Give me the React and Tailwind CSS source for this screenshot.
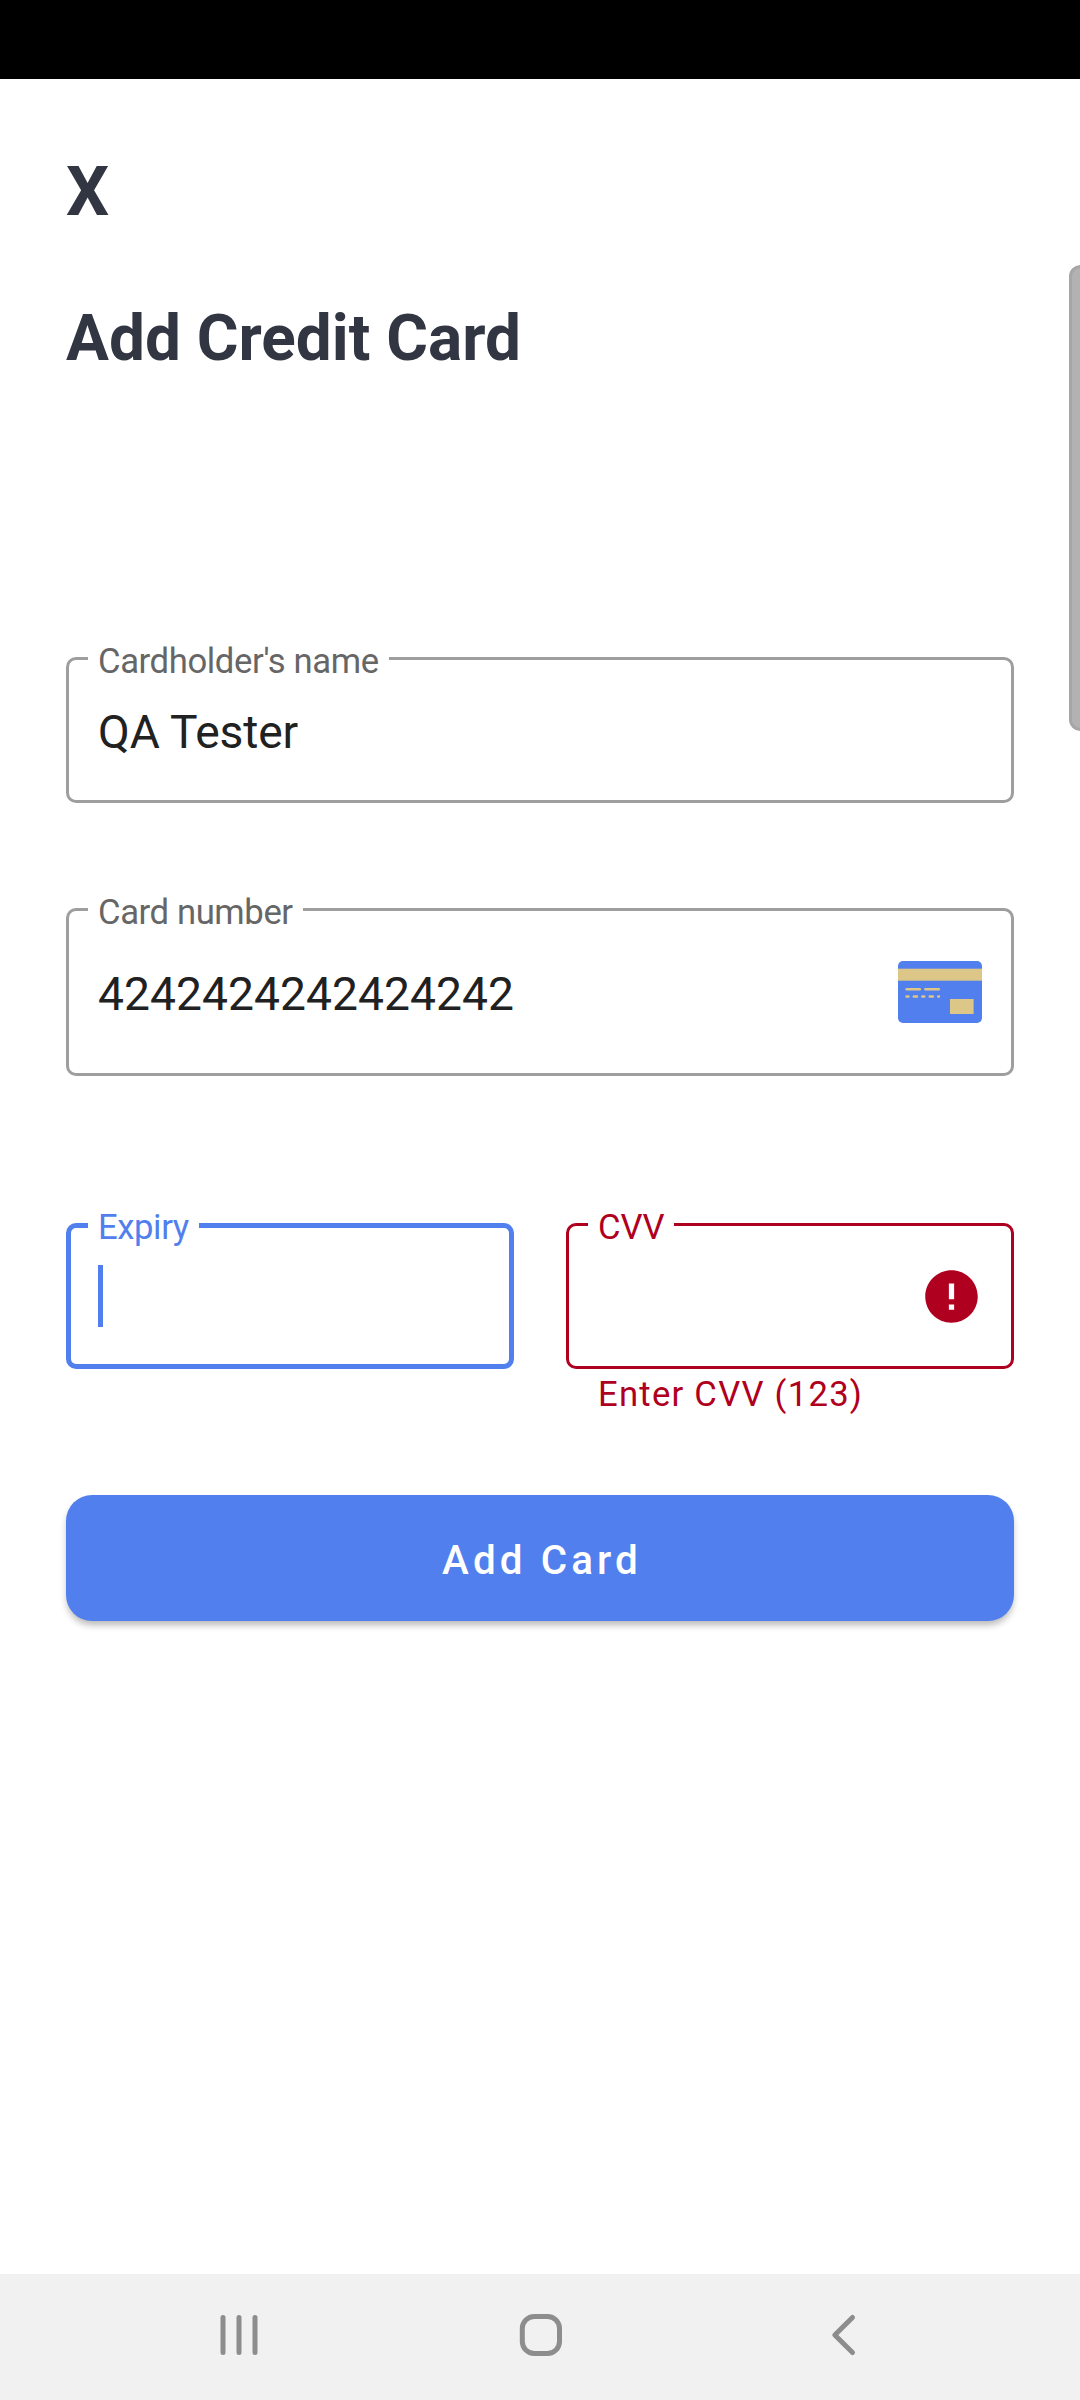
import React from "react";

function OutlinedField({ label, notch, tone, className, children }) {
  return (
    <div className={`relative flex items-center rounded-[10px] ${tone} ${className}`}>
      <span
        className={`absolute flex h-[40px] items-center whitespace-nowrap bg-white pl-[10px] text-[34.65px] leading-[40px] ${notch}`}
      >
        {label}
      </span>
      {children}
    </div>
  );
}

function CardIcon() {
  return (
    <svg className="ml-auto mr-[29px] h-[62px] w-[84px]" viewBox="0 0 84 62">
      <rect width="84" height="62" rx="5" fill="#527fee" />
      <rect y="7.7" width="84" height="12" fill="#dcc788" />
      <g stroke="#dcc788" strokeWidth="2.6" strokeLinecap="round">
        <path d="M8.6 28.2H21.8M27.4 28.2H40.8" />
        <path d="M8.6 35.5H10.4M15.8 35.5H19M24.4 35.5H26.2M31.8 35.5H34.8M40.3 35.5H40.9" />
      </g>
      <rect x="52" y="38" width="23.6" height="15" fill="#dcc788" />
    </svg>
  );
}

function ErrorIcon() {
  return (
    <svg className="ml-auto mr-[28px] h-[63px] w-[63px]" viewBox="0 0 24 24" fill="#b00020">
      <path d="M12 2C6.48 2 2 6.48 2 12s4.48 10 10 10 10-4.48 10-10S17.52 2 12 2zm1 15h-2v-2h2v2zm0-4h-2V7h2v6z" />
    </svg>
  );
}

function NavBar() {
  return (
    <nav className="h-[126px] w-full bg-[#f1f1f1]">
      <svg className="block h-[126px] w-[1080px]" viewBox="0 0 1080 126" fill="none" stroke="#8d8d8d" strokeLinecap="round">
        <path d="M223 43.5V78.5M239 43.5V78.5M255 43.5V78.5" strokeWidth="5" />
        <rect x="522.3" y="42.5" width="37.2" height="37" rx="12" strokeWidth="5" />
        <path d="M852.5 43.5L834.8 61L852.5 78.5" strokeWidth="5" strokeLinejoin="round" />
      </svg>
    </nav>
  );
}

export default function App() {
  return (
    <div className="relative flex h-[2400px] w-[1080px] flex-col overflow-hidden bg-white font-[Roboto,sans-serif]">
      <div className="h-[79px] w-full bg-black" />
      <div className="absolute right-[-12px] top-[265px] h-[466px] w-[23px] rounded-[12px] border-[3px] border-[#a6a6a6] bg-[#b2b2b2]" />
      <main className="flex flex-1 flex-col px-[66px]">
        <div className="mt-[73px] h-[80px] text-[68px] font-bold leading-[80px] text-[#323643]">X</div>
        <h1 className="mt-[69px] h-[76px] text-[63.9px] font-bold leading-[76px] text-[#323643]">Add Credit Card</h1>

        <OutlinedField
          label="Cardholder's name"
          tone="border-[3px] border-[#9e9e9e]"
          notch="left-[19px] top-[-19px] w-[301px] tracking-[-0.4px] text-[#666666]"
          className="mt-[280px] h-[146px]"
        >
          <span className="pl-[29px] pt-[4px] text-[46.2px] leading-[54px] tracking-[-0.15px] text-[#212121]">QA Tester</span>
        </OutlinedField>

        <OutlinedField
          label="Card number"
          tone="border-[3px] border-[#9e9e9e]"
          notch="left-[19px] top-[-19px] w-[215px] tracking-[-0.4px] text-[#666666]"
          className="mt-[105px] h-[168px]"
        >
          <span className="pl-[29px] pt-[3px] text-[46.2px] leading-[54px] tracking-[0.04px] text-[#212121]">4242424242424242</span>
          <CardIcon />
        </OutlinedField>

        <div className="mt-[147px] flex justify-between">
          <OutlinedField
            label="Expiry"
            tone="border-[5px] border-[#527fee]"
            notch="left-[17px] top-[-21px] w-[111px] tracking-[-0.4px] text-[#527fee]"
            className="h-[146px] w-[448px]"
          >
            <span className="ml-[27px] h-[62px] w-[5px] bg-[#527fee]" />
          </OutlinedField>
          <div className="flex w-[448px] flex-col">
            <OutlinedField
              label="CVV"
              tone="border-[3px] border-[#b00020]"
              notch="left-[19px] top-[-19px] w-[86px] text-[#b00020]"
              className="h-[146px]"
            >
              <ErrorIcon />
            </OutlinedField>
            <p className="mt-[5px] h-[40px] whitespace-nowrap pl-[32px] text-[34.65px] leading-[40px] tracking-[1.25px] text-[#b00020]">
              Enter CVV (123)
            </p>
          </div>
        </div>

        <button className="mt-[81px] flex h-[126px] w-full items-center justify-center rounded-[26px] bg-[#527fee] pl-[4px] pt-[5px] text-[40.4px] font-medium leading-[48px] tracking-[4.1px] text-white shadow-[0_5px_7px_-1px_rgba(0,0,0,0.28)]">
          Add Card
        </button>
      </main>
      <NavBar />
    </div>
  );
}
